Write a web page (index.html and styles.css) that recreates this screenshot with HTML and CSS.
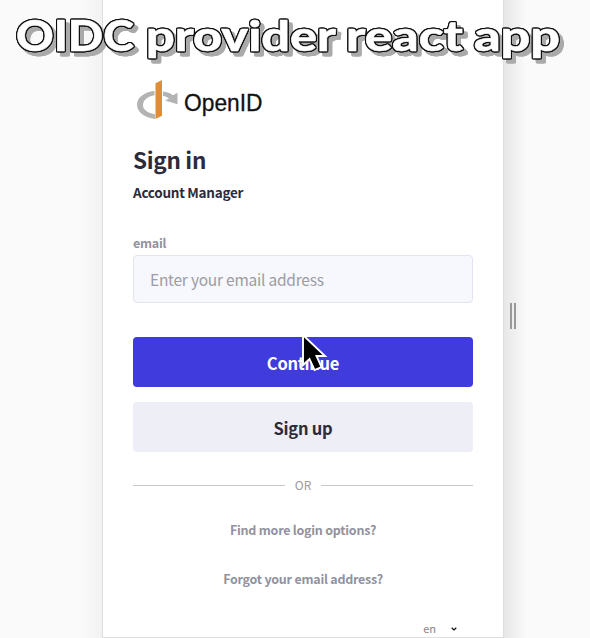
FILE: index.html
```html
<!DOCTYPE html>
<html lang="en">
<head>
<meta charset="utf-8">
<title>Sign in</title>
<link rel="stylesheet" href="styles.css">
</head>
<body>
<div class="stage">
  <main class="panel">
    <div class="logo">
      <svg class="logo-mark" width="44" height="42" viewBox="0 0 44 40" preserveAspectRatio="none">
        <path d="M18.500 11.500C8 12.500 1 18 1 24.500C1 31.500 9 37 19 38V33.500C12 32.500 7 29.500 7 25C7 20 12 16.500 18.500 15.500Z" fill="#b3b3b3"/>
        <path d="M27 12C31 12.500 34 13.500 37 15.500L41.500 13V24L29 20.500L33 18.500C31 17.500 29 16.500 27 16Z" fill="#b3b3b3"/>
        <path d="M19.500 4L26 1V35L19.500 38Z" fill="#e08e35"/>
      </svg>
      <svg class="logo-name" width="90" height="36" viewBox="0 0 90 36"><text x="4" y="26" textLength="78.500" lengthAdjust="spacingAndGlyphs">OpenID</text></svg>
    </div>
    <h1>Sign in</h1>
    <h2>Account Manager</h2>
    <form class="form">
      <label for="email">email</label>
      <input id="email" type="text" placeholder="Enter your email address">
      <button type="button" class="btn primary">Continue</button>
      <button type="button" class="btn secondary">Sign up</button>
    </form>
    <div class="divider"><span>OR</span></div>
    <nav class="links">
      <a>Find more login options?</a>
      <a>Forgot your email address?</a>
    </nav>
    <footer class="language">
      <span>en</span>
      <svg width="6" height="4" viewBox="0 0 6 4"><path d="M.7.8L3 2.900L5.300.8" fill="none" stroke="#111" stroke-width="1.300"/></svg>
    </footer>
  </main>
  <div class="handle"></div>
  <svg class="caption" width="590" height="76" viewBox="0 0 590 76">
    <text x="16" y="51" textLength="118" lengthAdjust="spacingAndGlyphs">OIDC</text>
    <text x="146" y="51" textLength="190" lengthAdjust="spacingAndGlyphs">provider</text>
    <text x="346" y="51" textLength="117" lengthAdjust="spacingAndGlyphs">react</text>
    <text x="474" y="51" textLength="86" lengthAdjust="spacingAndGlyphs">app</text>
  </svg>
  <svg class="cursor" width="28" height="44" viewBox="0 0 28 44">
    <path d="M2 3V33L8.500 27L13.500 38L20.500 35L15.500 24H24Z" fill="#000" stroke="#fff" stroke-width="1.900"/>
  </svg>
</div>
</body>
</html>
```
FILE: styles.css
```css
* { box-sizing: border-box; }
body {
  margin: 0;
  background: #fafafa;
  font-family: "Noto Sans CJK SC", "Noto Sans", sans-serif;
  color: #2c2b3a;
}
.stage {
  position: relative;
  display: flex;
  align-items: center;
  height: 638px;
  padding-left: 102px;
  overflow: hidden;
  background: linear-gradient(90deg, #fafafa 80px, #f2f2f2 102px, #e6e6e6 503px, #f2f2f2 517px, #fafafa 526px);
}
.panel {
  width: 402px;
  height: 638px;
  padding: 79px 30px 0;
  background: #fff;
  border: solid #dedede;
  border-width: 0 1px 1px;
}
.logo { display: flex; height: 48px; padding-left: 3px; }
.logo-name { margin-top: 6px; }
.logo-name text {
  font: 24.500px "Liberation Sans", Arial, sans-serif;
  fill: #111;
  stroke: #111;
  stroke-width: .3px;
}
h1, h2 { margin: 0; font-weight: 700; }
h1 { margin-top: 15px; font-size: 22.500px; line-height: 34px; letter-spacing: -.3px; }
h2 { margin-top: 6px; font-size: 13.500px; line-height: 20px; letter-spacing: -.27px; }
.form { display: flex; flex-direction: column; margin-top: 32px; }
label {
  font-size: 12.500px;
  font-weight: 700;
  line-height: 18px;
  letter-spacing: -.25px;
  color: #92929b;
}
input {
  height: 48px;
  margin-top: 3px;
  padding: 0 16px;
  border: 1px solid #e2e5ef;
  border-radius: 4px;
  background: #f6f8fe;
  font: 15.500px "Noto Sans CJK SC", sans-serif;
  letter-spacing: -.23px;
}
input::placeholder { color: #9c9ca2; opacity: 1; }
.btn {
  height: 50px;
  padding: 2px 0 0;
  border: 0;
  border-radius: 4px;
  font: 700 16.500px "Noto Sans CJK SC", sans-serif;
  letter-spacing: -.25px;
}
.primary { margin-top: 34px; background: #403bdd; color: #fff; }
.secondary { margin-top: 15px; background: #edeef6; color: #2c2b3a; }
.divider {
  display: flex;
  align-items: center;
  gap: 10px;
  height: 20px;
  margin-top: 23px;
  font-size: 12px;
  line-height: 16px;
  color: #9a9a9e;
}
.divider::before, .divider::after { content: ""; flex: 1; height: 1px; background: #c9c9c9; }
.links {
  display: flex;
  flex-direction: column;
  align-items: center;
  gap: 29px;
  margin-top: 25px;
  font-size: 12.500px;
  font-weight: 700;
  line-height: 20px;
  letter-spacing: -.24px;
  color: #92929f;
}
.language {
  display: flex;
  align-items: center;
  justify-content: flex-end;
  gap: 15px;
  height: 14px;
  margin-top: 33px;
  padding-right: 16px;
  font-size: 11px;
  line-height: 14px;
  color: #85858f;
}
.language span { margin-top: -3px; }
.handle {
  width: 6px;
  height: 26px;
  margin-left: 6px;
  margin-top: -6px;
  border: solid #999;
  border-width: 0 2px;
}
.caption {
  position: absolute;
  left: 0;
  top: 0;
  filter: drop-shadow(1px 0 0 #111) drop-shadow(-1px 0 0 #111) drop-shadow(0 1px 0 #111) drop-shadow(0 -1px 0 #111) drop-shadow(4px 4px 0 #aaa);
}
.caption text {
  font: 900 42px Lato, sans-serif;
  fill: #fff;
  stroke: #fff;
  stroke-width: .5px;
}
.cursor { position: absolute; left: 301px; top: 332px; }
```
